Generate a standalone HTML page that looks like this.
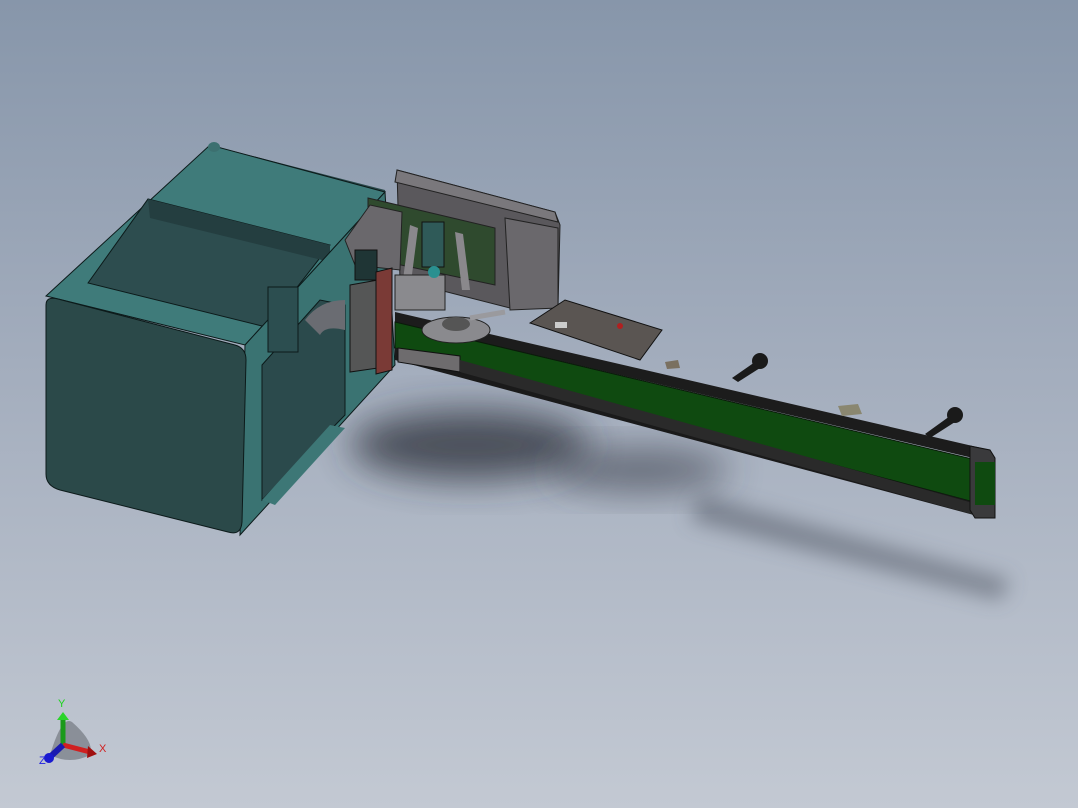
<!DOCTYPE html>
<html><head><meta charset="utf-8"><style>
html,body{margin:0;padding:0;}
body{width:1078px;height:808px;overflow:hidden;background:linear-gradient(180deg,#8796aa 0%,#a3adbd 45%,#c3c9d3 100%);}
svg{display:block}
</style></head><body>
<svg width="1078" height="808" viewBox="0 0 1078 808" xmlns="http://www.w3.org/2000/svg">
<defs>
<filter id="b" x="-50%" y="-50%" width="200%" height="200%"><feGaussianBlur stdDeviation="18"/></filter>
<filter id="b2" x="-50%" y="-50%" width="200%" height="200%"><feGaussianBlur stdDeviation="10"/></filter>
</defs>
<ellipse cx="470" cy="445" rx="120" ry="35" fill="#2a2e38" opacity="0.75" filter="url(#b)"/>
<ellipse cx="640" cy="470" rx="90" ry="22" fill="#2e323c" opacity="0.55" filter="url(#b)"/>
<polygon points="700,495 1010,580 1000,600 690,520" fill="#4a505c" opacity="0.5" filter="url(#b2)"/>

<!-- cage -->
<polygon points="210,145 385,190 395,365 245,345" fill="#2b4a4c"/>
<polygon points="46,296 210,145 385,192 245,345" fill="#3f7b7a" stroke="#0c1a1a" stroke-width="1"/>
<polygon points="88,283 148,199 330,245 266,327" fill="#2d4d4f" stroke="#0c1a1a"/>
<polygon points="148,199 330,245 330,262 150,218" fill="#243e40"/>
<polygon points="245,345 385,192 395,365 240,535" fill="#3a7372" stroke="#0c1a1a"/>
<polygon points="262,365 320,300 345,305 345,415 262,500" fill="#2b4a4c" stroke="#0c1a1a"/>
<polygon points="262,500 330,425 345,428 275,505" fill="#3d7776"/>
<path d="M46,305 Q46,296 58,299 L235,345 Q246,348 246,360 L242,522 Q241,536 228,532 L60,490 Q46,486 46,474 Z" fill="#2b4949" stroke="#0c1a1a"/>
<rect x="268" y="287" width="30" height="65" fill="#2c4e50" stroke="#0c1a1a"/>
<ellipse cx="214" cy="147" rx="6" ry="5" fill="#3c7070"/>
<!-- gray machine -->
<polygon points="397,170 555,212 560,225 558,308 510,308 400,280" fill="#5a585c" stroke="#222"/>
<polygon points="397,170 555,212 558,222 395,182" fill="#7a787c" stroke="#222"/>
<polygon points="505,218 558,228 558,308 510,310" fill="#6a686c" stroke="#222"/>
<polygon points="368,198 495,228 495,285 368,258" fill="#2f4a2e" stroke="#222"/>
<rect x="422" y="222" width="22" height="45" fill="#2f5a58" stroke="#111"/>
<polygon points="345,240 370,205 402,212 400,270 355,265" fill="#6a686c" stroke="#222"/>
<polygon points="410,225 418,228 410,290 402,288" fill="#8a888c"/>
<polygon points="455,232 463,234 470,290 462,290" fill="#8a888c"/>
<rect x="355" y="250" width="22" height="30" fill="#1f3535" stroke="#111"/>
<rect x="395" y="275" width="50" height="35" fill="#8a8a8e" stroke="#222"/>
<circle cx="434" cy="272" r="6" fill="#2a9090"/>
<polygon points="350,285 378,280 378,368 350,372" fill="#555656" stroke="#111"/>
<polygon points="376,272 392,268 392,370 376,374" fill="#7a3a36" stroke="#111"/>
<path d="M305,320 Q320,300 345,300 L345,330 Q325,325 320,335 Z" fill="#6a6c72"/>
<!-- conveyor -->
<polygon points="395,312 990,450 990,462 395,322" fill="#1c1c1c"/>
<polygon points="395,322 985,462 985,505 395,348" fill="#0f4a10" stroke="#0a1a0a"/>
<polygon points="395,348 985,505 985,518 395,360" fill="#1a1a1a"/>
<polygon points="398,348 460,356 460,372 398,362" fill="#6e6c6e" stroke="#111"/>
<polygon points="460,360 980,505 975,515 460,372" fill="#2a2a2a"/>
<polygon points="970,446 990,450 995,458 995,518 975,518 970,510" fill="#3a3a3c" stroke="#111"/>
<polygon points="975,462 995,462 995,505 975,505" fill="#0f4a10"/>
<polygon points="530,323 565,300 662,330 640,360" fill="#5a5552" stroke="#111"/>
<circle cx="620" cy="326" r="3" fill="#b02020"/>
<rect x="555" y="322" width="12" height="6" fill="#ccc"/>
<ellipse cx="456" cy="330" rx="34" ry="13" fill="#8a8a8e" stroke="#222"/>
<ellipse cx="456" cy="324" rx="14" ry="7" fill="#555"/>
<path d="M470,318 L505,312" stroke="#9a9a9e" stroke-width="5"/>
<g fill="#1a1a1a"><path d="M732,378 L755,362 L760,368 L738,382 Z"/><ellipse cx="760" cy="361" rx="8" ry="8"/>
<path d="M925,434 L950,416 L955,422 L930,438 Z"/><ellipse cx="955" cy="415" rx="8" ry="8"/></g>
<polygon points="838,406 858,404 862,414 842,416" fill="#8a8770"/>
<polygon points="665,362 678,360 680,368 667,369" fill="#7a7060"/>
<!-- triad -->
<path d="M50,755 Q62,715 72,722 Q95,742 90,755 Q70,765 50,755 Z" fill="#555a62" opacity="0.5"/>
<line x1="63" y1="745" x2="63" y2="720" stroke="#1a9a1a" stroke-width="5"/>
<polygon points="57,720 69,720 63,712" fill="#2ad42a"/>
<line x1="63" y1="745" x2="90" y2="752" stroke="#d02020" stroke-width="5"/>
<polygon points="88,746 97,754 87,758" fill="#a01010"/>
<line x1="63" y1="745" x2="50" y2="757" stroke="#1a1ab0" stroke-width="6"/>
<circle cx="49" cy="758" r="5" fill="#1a1ad0"/>
<text x="58" y="707" font-family="Liberation Sans,sans-serif" font-size="11" fill="#1ad41a">Y</text>
<text x="99" y="752" font-family="Liberation Sans,sans-serif" font-size="11" fill="#d02020">X</text>
<text x="39" y="764" font-family="Liberation Sans,sans-serif" font-size="11" fill="#2020e0">Z</text>
</svg>
</body></html>
